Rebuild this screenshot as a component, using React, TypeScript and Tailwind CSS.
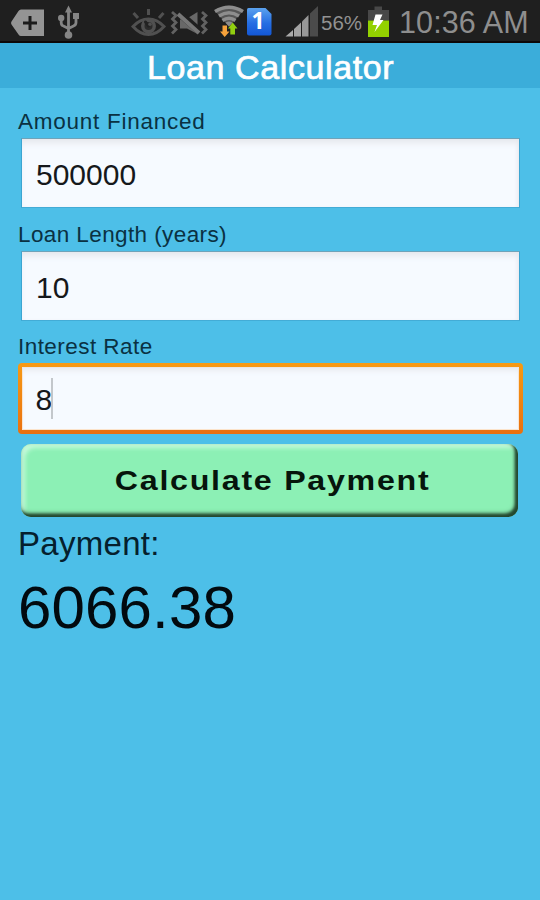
import type { ReactNode } from "react";

function Icon({ box, className, children }: { box: [number, number, number, number]; className?: string; children: ReactNode }) {
  return (
    <svg viewBox={box.join(" ")} width={box[2]} height={box[3]} className={`shrink-0 ${className ?? ""}`}>
      {children}
    </svg>
  );
}

/**
 * Android status bar
 */
function StatusBar() {
  return (
    <header className="flex h-[43px] items-start overflow-hidden border-b-2 border-[#0d0808] bg-[#1f1f1f]">
      {/* tag */}
      <Icon box={[10, 0, 36, 41]} className="ml-[10px]">
        <path d="M21 9.5H44V36H21Q19.500 36 18.500 34.500L11.500 24.500Q10.500 23 11.500 21.500L18.500 11Q19.500 9.500 21 9.500Z" fill="#949494" />
        <path d="M30 16V30M23 23H37" stroke="#1c1c1c" strokeWidth="3" />
      </Icon>
      {/* usb */}
      <Icon box={[56, 0, 26, 41]} className="ml-[10px]">
        <g fill="none" stroke="#858585" strokeWidth="2.800">
          <path d="M68.500 10V35M61.200 18V22.500Q61.200 25.500 63.500 26L68.500 28.500M76 16V22.500Q76 25 73.500 26L68.500 28.500" />
        </g>
        <path d="M68.500 5.500L72 12.500H65Z" fill="#858585" />
        <circle cx="61.200" cy="18" r="3.200" fill="#858585" />
        <rect x="73" y="13" width="6" height="6" fill="#858585" />
        <circle cx="68.500" cy="35" r="3.800" fill="#858585" />
      </Icon>
      {/* smart stay eye */}
      <Icon box={[131, 0, 36, 41]} className="ml-[49px]">
        <g fill="none" stroke="#505050" strokeWidth="3">
          <path d="M133 26.500Q140 19 148.500 19T164 26.500Q157 34.500 148.500 34.500T133 26.500Z" />
          <path d="M148.500 9V15M133.500 13L138 18M163.500 13L159 18" />
        </g>
        <circle cx="148.500" cy="26" r="7.500" fill="#505050" />
        <circle cx="148.500" cy="26" r="4" fill="#2b2b2b" />
        <path d="M148.500 26L145.500 22" stroke="#222" strokeWidth="3" strokeLinecap="round" />
        <circle cx="150" cy="24.300" r="1.800" fill="#505050" />
      </Icon>
      {/* vibrate, muted */}
      <Icon box={[170, 0, 38, 41]} className="ml-[3px]">
        <path
          d="M172 12L176 15.500L172.500 19L176 22.500L172.500 26L176 29.500L172 33.500M202 12L206 15.500L202.500 19L206 22.500L202.500 26L206 29.500L202 33.500"
          fill="none"
          stroke="#626262"
          strokeWidth="2.800"
        />
        <path d="M180 19.500V28.500H187L197.500 34V12L187 18.500Z" fill="#686868" />
        <path d="M179 13L200 31.500" stroke="#1f1f1f" strokeWidth="7" />
        <path d="M178 14L199 33" stroke="#777" strokeWidth="4" />
      </Icon>
      {/* wifi */}
      <Icon box={[214, 0, 30, 41]} className="ml-[6px]">
        <path d="M214.500 10.500Q229 1 243.500 10.500L229 26.500Z" fill="#555" />
        <g fill="none" stroke="#8d8d8d" strokeWidth="3.400">
          <path d="M215 11.500Q229 3 243 11.500" />
          <path d="M219 16Q229 9.500 239 16" />
          <path d="M222.500 20.500Q229 16 235.500 20.500" />
        </g>
        <path d="M225.500 22.800Q229 20 232.500 22.800L229 26.500Z" fill="#8d8d8d" />
        <path d="M222.500 25.500H227V31.500H229.500L224.700 37L220 31.500H222.500Z" fill="#f7a23b" />
        <path d="M230.300 34.500V28.500H228L232.700 22.500L237.500 28.500H235V34.500Z" fill="#92cf10" />
      </Icon>
      {/* sim card */}
      <div className="relative ml-[2px] mt-[8px] h-[28px] w-[26px]">
        <Icon box={[246, 8, 26, 28]}>
          <defs>
            <linearGradient id="sim" x1="0" y1="0" x2="0" y2="1">
              <stop offset="0" stopColor="#5ba2ee" />
              <stop offset="0.550" stopColor="#256ee3" />
              <stop offset="1" stopColor="#1357d5" />
            </linearGradient>
          </defs>
          <path d="M248.500 8H265.500L271.500 14V33.500Q271.500 35.500 269.500 35.500H249Q247 35.500 247 33.500V9.500Q247 8 248.500 8Z" fill="url(#sim)" />
        </Icon>
        <span className="absolute left-[5.5px] top-0 font-['Open_Sans'] text-[23px] font-bold leading-[24px] text-white">
          1
        </span>
      </div>
      {/* signal */}
      <Icon box={[285, 0, 34, 41]} className="ml-[13px]">
        <path d="M285.500 36.500L293 30V36.500Z" fill="#aaa" />
        <path d="M294 29L301 22.500V36.500H294Z" fill="#a3a3a3" />
        <path d="M302 21.500L308.500 15V36.500H302Z" fill="#989898" />
        <path d="M310 13.500L318 6V36.500H310Z" fill="#4b4b4b" />
      </Icon>
      <span className="ml-[2px] mt-[10px] w-[44px] text-[20.500px] leading-[26px] text-[#929292]">56%</span>
      {/* battery */}
      <Icon box={[367, 0, 23, 41]} className="ml-[2px]">
        <path d="M374.500 6.500H382V10H389V20.500H368V10H374.500Z" fill="#484848" />
        <rect x="368" y="20.500" width="21" height="16.500" fill="#93d100" />
        <path d="M375.500 14.500H382.500L380 20H383.500L374.500 32L377 25H372.500Z" fill="#fff" />
      </Icon>
      <span className="ml-[9px] whitespace-nowrap text-[30.500px] leading-[44px] tracking-[0.1px] text-[#8e8e8e]">10:36 AM</span>
    </header>
  );
}

function Field({ label, value, focused, className }: { label: string; value: string; focused?: boolean; className?: string }) {
  return (
    <div className="h-[112.5px]">
      <div className={`h-[31px] pl-[18px] text-[22.5px] leading-[29px] text-[#0a3142] ${className ?? ""}`}>{label}</div>
      {focused ? (
        <div className="ml-[18px] h-[71px] w-[505px] rounded-[4px] bg-linear-to-b from-[#f79a14] to-[#e9700f] p-[4px]">
          <div className="flex h-full items-center bg-[#f6faff] pl-[13.5px] shadow-[inset_0_5px_6px_-2px_#e6e8ed,inset_0_0_0_1px_#fbe3cb]">
            <span className="pt-[2px] text-[30px] leading-[36px] text-[#15181b]">{value}</span>
            <span className="-ml-[1px] h-[41px] w-[2px] bg-[#c3c7cb]" />
          </div>
        </div>
      ) : (
        <div className="ml-[20.5px] flex h-[70px] w-[499px] items-center border border-t-[#6fa3b9] border-r-[#3ba5d2] border-b-[#43acd6] border-l-[#3ba5d2] bg-[#f6faff] pl-[14.5px] shadow-[inset_0_6px_6px_-2px_#e6e8ed,inset_-3px_0_4px_-2px_#e6e8ed]">
          <span className="pt-[4px] text-[30px] leading-[36px] text-[#15181b]">{value}</span>
        </div>
      )}
    </div>
  );
}

export default function App() {
  return (
    <div className="h-[900px] w-[540px] overflow-hidden bg-[#4dbfe8] font-['Liberation_Sans',sans-serif]">
      <StatusBar />
      <h1 className="h-[45px] bg-[#3badda] pl-[147px] text-[34px] leading-[48px] tracking-[0.6px] text-white [-webkit-text-stroke:0.7px_white]">
        Loan Calculator
      </h1>
      <main className="pt-[19.4px]">
        <Field label="Amount Financed" value="500000" className="tracking-[0.75px]" />
        <Field label="Loan Length (years)" value="10" className="tracking-[0.4px]" />
        <Field label="Interest Rate" value="8" focused className="tracking-[0.45px]" />
        <button
          type="button"
          className="-mt-[0.5px] ml-[21px] block h-[73px] w-[497px] rounded-[10px] bg-[#8cf0b5] text-[28px] font-bold leading-[36px] text-[#06150c] shadow-[inset_-3px_-3px_3px_#23472f,inset_-2px_-3px_5px_#417553,inset_4px_4px_4px_#c5fadb]"
        >
          <span className="inline-block scale-x-[1.150] whitespace-nowrap pl-[5px] tracking-[1.500px]">Calculate Payment</span>
        </button>
        <div className="pl-[18px] pt-[6.5px] text-[33px] leading-[40px] tracking-[0.3px] text-[#05202d]">Payment:</div>
        <div className="pl-[18px] pt-[9px] text-[60px] leading-[70px] tracking-[0.150px] text-[#020a0f]">6066.38</div>
      </main>
    </div>
  );
}
